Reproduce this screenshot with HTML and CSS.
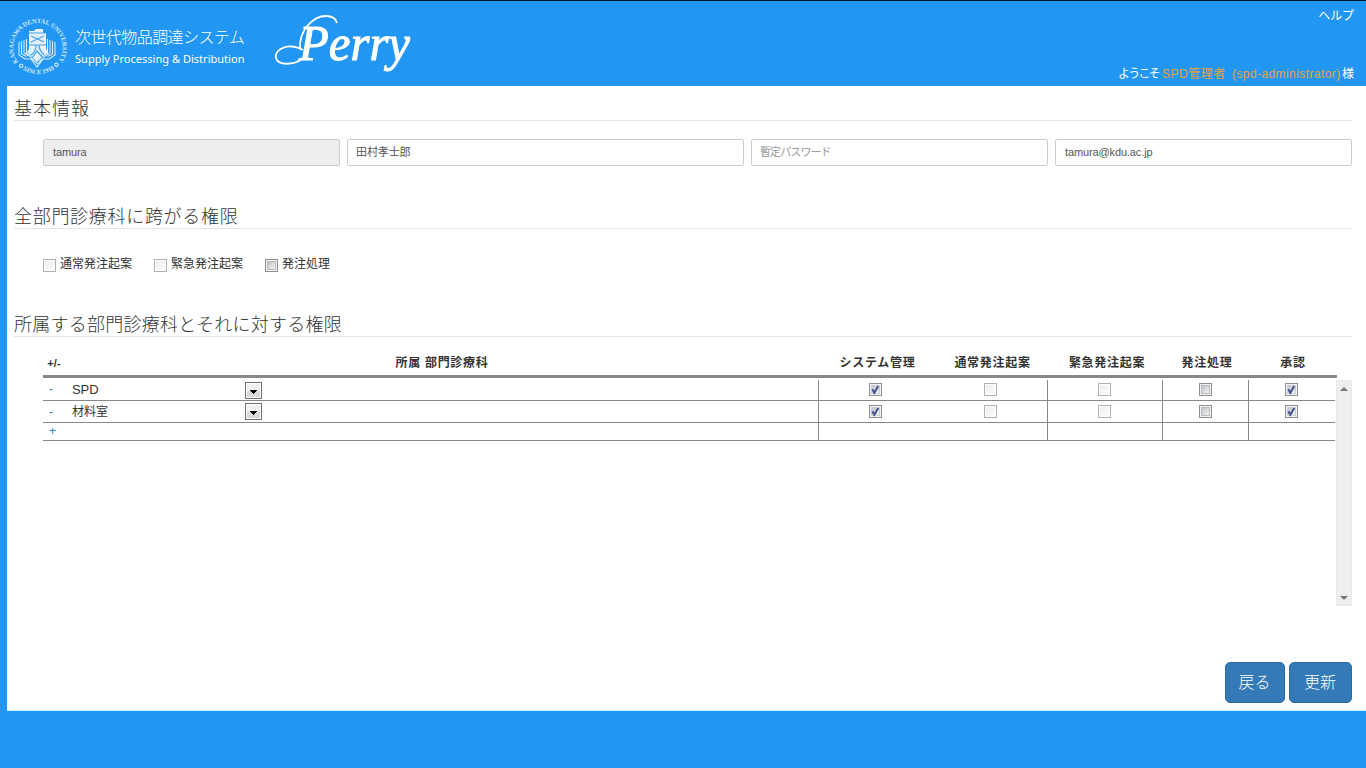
FILE: index.html
```html
<!DOCTYPE html>
<html lang="ja">
<head>
<meta charset="utf-8">
<title>Perry</title>
<link rel="stylesheet" href="styles.css">
</head>
<body>
<svg class="defs" width="0" height="0">
  <defs>
    <linearGradient id="shade" x1="0" y1="0" x2="1" y2="1"><stop offset="0" stop-color="#b9bdc2"/><stop offset="1" stop-color="#f8f8f8"/></linearGradient>
    <linearGradient id="pale" x1="0" y1="0" x2="1" y2="1"><stop offset="0" stop-color="#eeeeee"/><stop offset="1" stop-color="#fcfcfc"/></linearGradient>
    <symbol id="off" viewBox="0 0 13 13"><rect x=".5" y=".5" width="12" height="12" fill="#fdfdfd" stroke="#b1b1b1"/><rect x="2" y="2" width="9" height="9" fill="url(#pale)"/></symbol>
    <symbol id="on" viewBox="0 0 13 13"><rect x=".5" y=".5" width="12" height="12" fill="#f4f4f4" stroke="#8e8f8f"/><rect x="2.5" y="2.5" width="8" height="8" fill="url(#shade)" stroke="#b7bbbf"/></symbol>
    <symbol id="tick" viewBox="0 0 13 13"><rect x=".5" y=".5" width="12" height="12" fill="#f4f4f4" stroke="#8e8f8f"/><rect x="2.5" y="2.5" width="8" height="8" fill="url(#shade)" stroke="#c9cfd8"/><path d="M3.3 6.3 5.3 9.7 9.3 3" fill="none" stroke="#42528f" stroke-width="2"/></symbol>
    <symbol id="drop" viewBox="0 0 17 17"><rect x=".5" y=".5" width="16" height="16" fill="#fff" stroke="#707070"/><rect x="2" y="2" width="13" height="7" fill="#f0f0f0"/><rect x="2" y="9" width="13" height="6" fill="#d8d8d8"/><path d="M5 8h7v1h-1v1h-1v1H9v1H8v-1H7v-1H6V9H5z" fill="#000"/></symbol>
  </defs>
</svg>
<header class="top">
  <svg class="emblem" width="62" height="64" viewBox="0 0 62 64">
    <defs><path id="ring" d="M11.200 47A24.500 24.500 0 1 1 50.800 47"/><path id="ring2" d="M8 47.500A28.500 28.500 0 0 0 54 47.500"/></defs>
    <text class="ring"><textPath href="#ring" textLength="106">KANAGAWA DENTAL UNIVERSITY</textPath></text>
    <text class="ring"><textPath href="#ring2" startOffset="4" textLength="47">✿ SINCE 1910 ✿</textPath></text>
    <g fill="none" stroke="#d9edff" stroke-width="1.100">
      <path d="M12 27v13l6 4h6l6 8 6-8h6l6-4V27M14.500 26v13l5 2.500M17 25v13l5 3M45.500 26v13l-5 2.500M43 25v13l-5 3M19.500 24v14l11 11 10-11V24"/>
    </g>
    <path d="M22 18v-2h5l2-2h7v4h3v16l2 3-11 10-10-10 2-3z" fill="#e6f3ff"/>
    <path d="M22 18h17M24 21l13 6M37 21l-13 6M22 30h17M29 30c0 5-2 8-5 10M32 30c0 5 3 8 5 10M25 43l5-7 6 7" fill="none" stroke="#3f9ff0" stroke-width="1.200"/>
  </svg>
  <div class="names"><span class="jp">次世代物品調達システム</span><span class="en">Supply Processing &amp; Distribution</span></div>
  <svg class="brand" width="146" height="66" viewBox="0 0 146 66">
    <path d="M28 38C27 19 41 5 54 5c7 0 10 3 11 7M31 39C17 31 2 38 4 47c2 8 18 7 26 1" fill="none" stroke="#fff" stroke-width="1.800"/>
    <text x="27" y="49" textLength="111" lengthAdjust="spacingAndGlyphs">Perry</text>
  </svg>
  <div class="user"><a class="help">ヘルプ</a><div class="hello"><span class="yo">ようこそ</span><span class="who">SPD管理者</span><span class="acct">(spd-administrator)</span><span>様</span></div></div>
</header>
<main class="page">
  <h2 class="title"><span class="t1">基本情報</span></h2>
  <div class="fields">
    <div class="input locked">tamura</div><div class="input"><span class="name">田村孝士郎</span></div><div class="input"><span class="hint">暫定パスワード</span></div><div class="input">tamura@kdu.ac.jp</div>
  </div>
  <h2 class="title second"><span class="t2">全部門診療科に跨がる権限</span></h2>
  <div class="checks">
    <label><svg><use href="#off"/></svg>通常発注起案</label><label><svg><use href="#off"/></svg>緊急発注起案</label><label><svg><use href="#on"/></svg>発注処理</label>
  </div>
  <h2 class="title third"><span class="t3">所属する部門診療科とそれに対する権限</span></h2>
  <div class="head"><span class="pm">+/-</span><span>所属 部門診療科</span><span>システム管理</span><span>通常発注起案</span><span>緊急発注起案</span><span>発注処理</span><span>承認</span></div>
  <div class="list">
    <div class="rows">
      <div class="row r1"><div class="dept"><a>-</a><span class="spd">SPD</span><svg class="drop"><use href="#drop"/></svg></div><div class="line"><svg><use href="#tick"/></svg></div><div><svg><use href="#off"/></svg></div><div class="line"><svg><use href="#off"/></svg></div><div class="line"><svg><use href="#on"/></svg></div><div class="line"><svg><use href="#tick"/></svg></div></div>
      <div class="row r2"><div class="dept"><a>-</a><span>材料室</span><svg class="drop"><use href="#drop"/></svg></div><div class="line"><svg><use href="#tick"/></svg></div><div><svg><use href="#off"/></svg></div><div class="line"><svg><use href="#off"/></svg></div><div class="line"><svg><use href="#on"/></svg></div><div class="line"><svg><use href="#tick"/></svg></div></div>
      <div class="row r3"><div class="dept"><a>+</a></div><div class="line"></div><div></div><div class="line"></div><div class="line"></div><div class="line"></div></div>
    </div>
    <div class="scroll"><svg width="8" height="4"><path d="M0 4 4 0l4 4z" fill="#777"/></svg><svg width="8" height="4"><path d="M0 0h8L4 4z" fill="#777"/></svg></div>
  </div>
  <div class="actions"><button class="back">戻る</button><button class="save">更新</button></div>
</main>
</body>
</html>
```
FILE: styles.css
```css
* { box-sizing: border-box; }
body { margin: 0; height: 768px; overflow: hidden; background: #2196f3; color: #333; font-family: "Liberation Sans", "Noto Sans CJK JP", sans-serif; font-size: 12px; }
span, a, label { white-space: nowrap; }
svg { flex: none; display: block; }
.defs { position: absolute; }
.top { height: 86px; border-top: 1px solid #06132b; display: flex; color: #fff; }
.emblem { margin: 14px 0 0 7px; }
.ring { font: bold 6.5px "Liberation Serif", "DejaVu Sans", serif; fill: #cfe8ff; }
.names { width: 194px; margin-left: 6px; padding-top: 23px; display: flex; flex-direction: column; font-family: "Noto Sans CJK JP", sans-serif; font-weight: 300; }
.jp { font-size: 16px; line-height: 24px; letter-spacing: -.57px; }
.en { font: 400 11px/22px "Noto Sans", sans-serif; letter-spacing: .02px; }
.brand { margin: 10px 0 0 3px; }
.brand text { font: italic 50px "Liberation Serif", serif; fill: #fff; stroke: #fff; stroke-width: 1px; }
.user { flex: 1; display: flex; flex-direction: column; align-items: flex-end; padding-right: 12px; }
.help { margin-top: 5px; line-height: 20px; letter-spacing: -.1px; }
.hello { margin-top: 38px; line-height: 21px; display: flex; }
.yo { width: 44px; letter-spacing: -1.8px; }
.who, .acct { color: #e9a13b; }
.who { width: 70px; letter-spacing: .5px; }
.acct { width: 110px; letter-spacing: .42px; }
.page { height: 625px; margin-left: 7px; padding: 10px 14px 0 7px; background: #fff; border-bottom: 1px solid #d4eafb; }
.title { margin: 0; height: 25px; border-bottom: 1px solid #e5e5e5; font: 300 18px/22px "Noto Sans CJK JP", sans-serif; }
.t1 { letter-spacing: 1px; }
.t2 { letter-spacing: .7px; }
.t3 { letter-spacing: .25px; }
.fields { margin: 18px 0 0 29px; display: grid; grid-template-columns: 297px 397px 297px 297px; gap: 7px; }
.input { height: 27px; padding: 0 9px; border: 1px solid #ccc; border-radius: 2px; color: #555; font-size: 11px; line-height: 25px; letter-spacing: -.12px; }
.locked { background: #eee; }
.name, .hint { display: block; line-height: 24px; margin-left: -1px; }
.hint { color: #999; letter-spacing: -.9px; }
.second { margin-top: 38px; }
.third { margin-top: 37px; }
.checks { height: 46px; padding: 25px 0 0 29px; display: flex; gap: 22px; line-height: 21px; }
.checks label { display: flex; gap: 4px; }
.checks svg { margin-top: 5px; }
.checks svg, .row svg { width: 13px; height: 13px; }
.head { margin: 13px 0 0 29px; width: 1294px; height: 28px; border-bottom: 3px solid #888; display: grid; grid-template-columns: 22px 754px 117px 113px 116px 84px 88px; text-align: center; font-weight: bold; line-height: 26px; letter-spacing: .7px; }
.pm { font-size: 11px; letter-spacing: .1px; }
.list { margin: 2px 0 0 29px; height: 226px; display: flex; gap: 1px; }
.rows { width: 1292px; }
.row { display: grid; grid-template-columns: 775px 115px 114px 115px 86px 87px; border-bottom: 1px solid #888; }
.r1 { height: 21px; }
.r2 { height: 22px; }
.r3 { height: 18px; }
.row > div { display: flex; justify-content: center; }
.row > .line { border-left: 1px solid #888; padding-right: 1px; }
.row > div > svg { margin-top: 3px; }
.r2 > div > svg { margin-top: 4px; }
.row > .dept { justify-content: flex-start; padding-left: 6px; line-height: 19px; }
.r2 > .dept { line-height: 22px; }
.r3 > .dept { line-height: 16px; }
.dept a { width: 23px; color: #337ab7; }
.dept span { width: 173px; }
.row .spd { font-size: 13px; letter-spacing: -.1px; }
.row .dept .drop { width: 17px; height: 17px; margin-top: 2px; }
.r2 .dept .drop { margin-top: 2px; }
.scroll { width: 16px; background: #eee; border: 1px solid #e8e8e8; display: flex; flex-direction: column; align-items: center; justify-content: space-between; padding: 6px 0 5px; }
.actions { margin-top: 56px; display: flex; justify-content: flex-end; gap: 4px; }
.actions button { height: 41px; padding: 0 1px 3px 0; border: 1px solid #2e6da4; border-radius: 5px; background: #337ab7; color: #fff; font: 300 16px "Noto Sans CJK JP", sans-serif; }
.back { width: 60px; }
.save { width: 63px; }
```
